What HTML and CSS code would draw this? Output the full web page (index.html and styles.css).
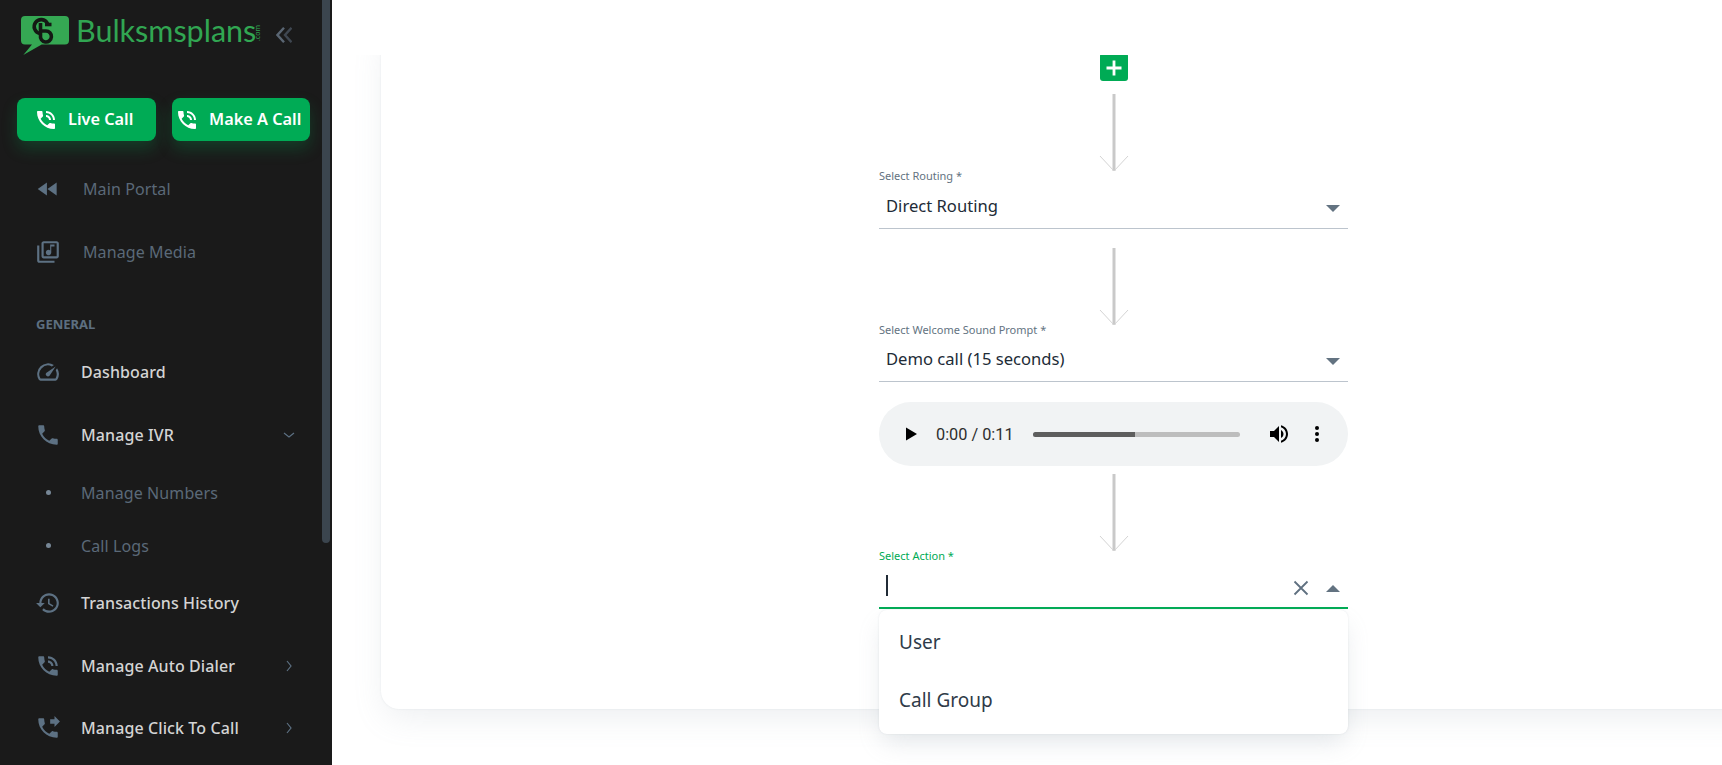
FILE: index.html
```html
<!DOCTYPE html>
<html lang="en">
<head>
<meta charset="utf-8">
<title>Bulksmsplans</title>
<link rel="stylesheet" href="styles.css">
</head>
<body>
<div class="layout">
  <aside class="sidebar">
    <div class="thumb"></div>
    <div class="brand">
      <svg class="logo" viewBox="0 0 48 40"><path fill="#35a853" d="M4 0h40a4 4 0 0 1 4 4v20.500a4 4 0 0 1-4 4H20.700L2.300 39 11 28.500H4a4 4 0 0 1-4-4V4a4 4 0 0 1 4-4z"/><g fill="none" stroke="#141814" stroke-width="3.600"><path d="M26.500 7.500A7 7 0 1 0 19 17.500"/><path d="M19.500 7v12.500a5.500 5.500 0 1 0 5.500-4.500h-5"/><path d="M24 8.500h6.500"/></g></svg>
      <span class="brand-name">Bulksmsplans</span><span class="brand-tld">.com</span>
      <svg class="collapse" viewBox="0 0 16 16"><path d="M8 .8 1.500 8 8 15.200" fill="none" stroke="#5a6673" stroke-width="2.400"/><path d="M15.500 .8 9 8l6.500 7.200" fill="none" stroke="#3f4751" stroke-width="2.400"/></svg>
    </div>
    <div class="actions">
      <a class="call-btn live"><svg class="ico-btn" viewBox="0 0 24 24"><use href="#i-talk"/></svg><span>Live Call</span></a>
      <a class="call-btn make"><svg class="ico-btn" viewBox="0 0 24 24"><use href="#i-talk"/></svg><span>Make A Call</span></a>
    </div>
    <nav class="nav">
      <a class="row muted indent"><svg class="ico" viewBox="0 0 24 24"><path d="M11 18V6l-8.500 6 8.500 6zm.5-6 8.500 6V6l-8.500 6z"/></svg><span>Main Portal</span></a>
      <a class="row muted indent"><svg class="ico" viewBox="0 0 24 24"><path d="M20 2H8c-1.100 0-2 .9-2 2v12c0 1.100.9 2 2 2h12c1.100 0 2-.9 2-2V4c0-1.100-.9-2-2-2zm0 14H8V4h12v12zm-7.500-1c1.380 0 2.500-1.120 2.500-2.500V7h3V5h-4v5.510c-.42-.32-.93-.51-1.500-.51-1.380 0-2.500 1.120-2.500 2.500s1.120 2.500 2.500 2.500zM2 6v14c0 1.100.9 2 2 2h14v-2H4V6H2z"/></svg><span>Manage Media</span></a>
      <div class="section">GENERAL</div>
      <a class="row"><svg class="ico" viewBox="0 0 24 24"><path d="m20.380 8.570-1.230 1.850a8 8 0 0 1-.22 7.580H5.070A8 8 0 0 1 15.580 6.850l1.850-1.230A10 10 0 0 0 3.350 19a2 2 0 0 0 1.720 1h13.850a2 2 0 0 0 1.740-1 10 10 0 0 0-.27-10.440zm-9.790 6.840a2 2 0 0 0 2.830 0l5.660-8.490-8.490 5.660a2 2 0 0 0 0 2.830z"/></svg><span>Dashboard</span></a>
      <a class="row"><svg class="ico" viewBox="0 0 24 24"><path d="M6.620 10.790c1.440 2.830 3.760 5.140 6.590 6.590l2.200-2.200c.27-.27.67-.36 1.020-.24 1.120.37 2.330.57 3.570.57.55 0 1 .45 1 1V20c0 .55-.45 1-1 1-9.390 0-17-7.610-17-17 0-.55.45-1 1-1h3.500c.55 0 1 .45 1 1 0 1.250.2 2.450.57 3.570.11.35.03.74-.25 1.020l-2.200 2.200z"/></svg><span>Manage IVR</span><svg class="caret" viewBox="0 0 12 12"><path d="m1 4 5 4 5-4"/></svg></a>
      <a class="sub"><i class="dot"></i><span>Manage Numbers</span></a>
      <a class="sub"><i class="dot"></i><span>Call Logs</span></a>
      <a class="row"><svg class="ico" viewBox="0 0 24 24"><path d="M13 3c-4.970 0-9 4.030-9 9H1l3.890 3.890.07.14L9 12H6c0-3.870 3.130-7 7-7s7 3.130 7 7-3.130 7-7 7c-1.930 0-3.680-.79-4.940-2.060l-1.420 1.420C8.270 19.990 10.510 21 13 21c4.970 0 9-4.030 9-9s-4.030-9-9-9zm-1 5v5l4.280 2.540.72-1.210-3.500-2.080V8H12z"/></svg><span>Transactions History</span></a>
      <a class="row"><svg class="ico" viewBox="0 0 24 24"><use href="#i-talk"/></svg><span>Manage Auto Dialer</span><svg class="caret" viewBox="0 0 12 12"><path d="m4 1 4 5-4 5"/></svg></a>
      <a class="row"><svg class="ico" viewBox="0 0 24 24"><path d="m18 11 5-5-5-5v3h-4v4h4v3zm2 4.500c-1.250 0-2.450-.2-3.570-.57-.35-.11-.74-.03-1.020.24l-2.200 2.200c-2.830-1.440-5.150-3.750-6.590-6.590l2.200-2.210c.28-.26.36-.65.25-1C8.700 6.450 8.500 5.250 8.500 4c0-.55-.45-1-1-1H4c-.55 0-1 .45-1 1 0 9.390 7.610 17 17 17 .55 0 1-.45 1-1v-3.500c0-.55-.45-1-1-1z"/></svg><span>Manage Click To Call</span><svg class="caret" viewBox="0 0 12 12"><path d="m4 1 4 5-4 5"/></svg></a>
    </nav>
  </aside>
  <main class="main">
    <div class="topbar"></div>
    <section class="card">
      <div class="form">
        <button class="add"><svg viewBox="0 0 18 18"><path d="M9 1.500v15M1.500 9h15" stroke="#fff" stroke-width="2.800" fill="none"/></svg></button>
        <svg class="arrow first" viewBox="0 0 30 78"><path d="M15 0v77" stroke="#c9c9c9" stroke-width="3" fill="none"/><path d="M1 62l14 15 14-15" stroke="#d4d4d4" stroke-width="1" fill="none"/></svg>
        <div class="field">
          <label class="flabel">Select Routing *</label>
          <div class="control"><span class="value">Direct Routing</span><i class="tri down"></i></div>
        </div>
        <svg class="arrow" viewBox="0 0 30 78"><path d="M15 0v77" stroke="#c9c9c9" stroke-width="3" fill="none"/><path d="M1 62l14 15 14-15" stroke="#d4d4d4" stroke-width="1" fill="none"/></svg>
        <div class="field">
          <label class="flabel">Select Welcome Sound Prompt *</label>
          <div class="control"><span class="value">Demo call (15 seconds)</span><i class="tri down"></i></div>
        </div>
        <div class="player">
          <svg class="p-play" viewBox="0 0 12 14"><path d="M0 0v14l12-7z"/></svg>
          <span class="p-time">0:00 / 0:11</span>
          <div class="p-track"><div class="p-fill"></div></div>
          <svg class="p-vol" viewBox="0 0 24 24"><path d="M3 9v6h4l5 5V4L7 9H3zm13.500 3c0-1.770-1.020-3.290-2.500-4.030v8.050c1.480-.73 2.500-2.250 2.500-4.020zM14 3.230v2.060c2.890.86 5 3.540 5 6.710s-2.110 5.850-5 6.710v2.060c4.010-.91 7-4.490 7-8.770s-2.990-7.860-7-8.770z"/></svg>
          <svg class="p-more" viewBox="0 0 6 18"><circle cx="3" cy="3" r="2"/><circle cx="3" cy="9" r="2"/><circle cx="3" cy="15" r="2"/></svg>
        </div>
        <svg class="arrow third" viewBox="0 0 30 78"><path d="M15 0v77" stroke="#c9c9c9" stroke-width="3" fill="none"/><path d="M1 62l14 15 14-15" stroke="#d4d4d4" stroke-width="1" fill="none"/></svg>
        <div class="field focus">
          <label class="flabel">Select Action *</label>
          <div class="control"><i class="cursor"></i><svg class="clear" viewBox="0 0 16 16"><path d="m1.500 1.500 13 13m0-13-13 13" stroke="#5f7080" stroke-width="1.800" fill="none"/></svg><i class="tri up"></i></div>
          <ul class="menu">
            <li>User</li>
            <li>Call Group</li>
          </ul>
        </div>
      </div>
    </section>
  </main>
</div>
<svg class="defs" width="0" height="0"><defs><path id="i-talk" d="M20 15.500c-1.250 0-2.450-.2-3.570-.57-.35-.11-.74-.03-1.020.24l-2.200 2.200c-2.830-1.440-5.150-3.750-6.590-6.590l2.200-2.210c.28-.26.36-.65.25-1C8.700 6.450 8.500 5.250 8.500 4c0-.55-.45-1-1-1H4c-.55 0-1 .45-1 1 0 9.390 7.610 17 17 17 .55 0 1-.45 1-1v-3.500c0-.55-.45-1-1-1zM19 12h2c0-4.970-4.030-9-9-9v2c3.870 0 7 3.130 7 7zm-4 0h2c0-2.760-2.240-5-5-5v2c1.660 0 3 1.340 3 3z"/></defs></svg>
</body>
</html>
```

FILE: styles.css
```css
* { box-sizing: border-box; }
html, body { margin: 0; height: 100%; overflow: hidden; background: #fff; }
body { font-family: "Noto Sans", "Liberation Sans", sans-serif; color: #212b36; }
.defs { position: absolute; }
.layout { display: flex; height: 765px; }

/* sidebar */
.sidebar { position: relative; flex: none; width: 332px; height: 765px; background: #1a1a1a; overflow: hidden; padding-top: 16px; }
.thumb { position: absolute; left: 322px; top: 0; width: 8px; height: 543px; background: #3b454e; border-radius: 0 0 4px 4px; }
.brand { display: flex; align-items: flex-start; height: 82px; padding-left: 21px; }
.logo { width: 48px; height: 40px; flex: none; }
.brand-name { flex: none; width: 179px; margin-left: 7px; margin-top: -6px; font-family: "Lato", sans-serif; font-size: 30.500px; line-height: 40px; color: #31a652; white-space: nowrap; }
.brand-tld { flex: none; width: 6px; margin-top: 9px; font-size: 7px; line-height: 6px; color: #31a652; writing-mode: vertical-rl; transform: rotate(180deg); }
.collapse { width: 16px; height: 16px; margin-left: 15px; margin-top: 11px; flex: none; }
.actions { display: flex; gap: 16px; padding-left: 17px; }
.call-btn { display: flex; align-items: center; height: 43px; border-radius: 8px; background: #00ab55; color: #fff; font-weight: 600; font-size: 16.300px; box-shadow: 0 8px 16px rgba(0, 171, 85, .24); white-space: nowrap; }
.call-btn span { margin-top: -2px; }
.live { width: 139px; padding-left: 17px; }
.make { width: 138px; padding-left: 3px; }
.ico-btn { width: 24px; height: 24px; fill: #fff; margin-right: 10px; flex: none; }
.nav { margin-top: 17px; }
.row { display: flex; align-items: center; height: 62.500px; padding-left: 35px; color: #d4d4d4; font-weight: 500; font-size: 16px; letter-spacing: .1px; }
.row span { margin-left: 20px; }
.ico { width: 26px; height: 26px; fill: #5d7183; flex: none; }
.muted { color: #5b6978; font-weight: 400; }
.indent span { margin-left: 22px; }
.section { margin: 29px 0 0 36px; height: 29px; line-height: 24px; font-size: 13px; font-weight: 700; color: #5d6f80; }
.caret { width: 12px; height: 12px; margin-left: auto; margin-right: 37px; flex: none; fill: none; stroke: #5d7183; stroke-width: 1.200; }
.sub { display: flex; align-items: center; height: 53px; padding-left: 46px; font-size: 16px; letter-spacing: .1px; color: #5b6978; }
.sub span { margin-left: 30px; }
.dot { width: 5px; height: 5px; border-radius: 50%; background: #778796; flex: none; }

/* main */
.main { flex: 1; min-width: 0; height: 765px; overflow: hidden; padding-left: 49px; }
.topbar { position: relative; z-index: 2; height: 55px; margin-left: -49px; background: #fff; }
.card { width: 1465px; height: 687px; margin-top: -33px; background: #fff; border-radius: 18px; box-shadow: 0 0 2px rgba(145, 158, 171, .2), 0 12px 32px -4px rgba(145, 158, 171, .16); padding-top: 31px; }
.form { width: 469px; margin: 0 auto; display: flex; flex-direction: column; align-items: center; }
.add { width: 28px; height: 28px; padding: 5px; border: 0; border-radius: 3px; background: #00ab55; display: block; }
.add svg { display: block; width: 18px; height: 18px; transform: translateY(1px); }
.arrow { display: block; width: 30px; height: 78px; flex: none; margin-top: 19px; }
.arrow.first { margin-top: 13px; }
.arrow.third { margin-top: 8px; }
.field { position: relative; width: 100%; height: 58.500px; margin-top: -2px; border-bottom: 1.500px solid #bcc4cd; }
.flabel { display: block; margin-top: -1px; font-size: 11px; line-height: 14px; color: #637381; }
.control { display: flex; align-items: center; height: 43px; padding: 0 7px; margin-top: 1px; }
.value { font-size: 16.600px; line-height: 24px; color: #212b36; }
.tri { width: 0; height: 0; border-left: 7px solid transparent; border-right: 7px solid transparent; margin-left: auto; margin-top: 5px; margin-right: 1px; }
.tri.down { border-top: 7px solid #637381; }
.tri.up { border-bottom: 7px solid #637381; margin-left: 17px; margin-top: 6px; }
.focus { border-bottom: 2px solid #00ab55; }
.focus .flabel { color: #00ab55; }
.cursor { width: 2px; height: 21px; background: #212b36; margin-top: 0; flex: none; }
.clear { width: 16px; height: 16px; margin-left: auto; margin-top: 4px; flex: none; }
.menu { position: absolute; z-index: 3; left: 0; right: 0; top: 60px; margin: 0; padding: 3px 0 5px; list-style: none; background: #fff; border-radius: 8px; box-shadow: 0 0 2px rgba(145, 158, 171, .24), 0 12px 24px -4px rgba(145, 158, 171, .24); }
.menu li { height: 58px; line-height: 58px; padding-left: 20px; font-size: 19px; color: #2f3b49; }
.player { display: flex; align-items: center; width: 100%; height: 64px; margin-top: 20px; border-radius: 32px; background: #f1f3f4; flex: none; }
.p-play { width: 11px; height: 14px; margin-left: 27px; fill: #000; flex: none; }
.p-time { margin-left: 19px; width: 97px; font-size: 16.300px; color: #2d2d2d; font-family: "Roboto", sans-serif; flex: none; }
.p-track { width: 207px; height: 5px; margin-left: 0; border-radius: 3px; background: #bdbdbd; overflow: hidden; flex: none; }
.p-fill { width: 102px; height: 5px; background: #5e5e5e; }
.p-vol { width: 24px; height: 24px; margin-left: 27px; fill: #000; flex: none; }
.p-more { width: 6px; height: 18px; margin-left: 23px; fill: #000; flex: none; }
```
